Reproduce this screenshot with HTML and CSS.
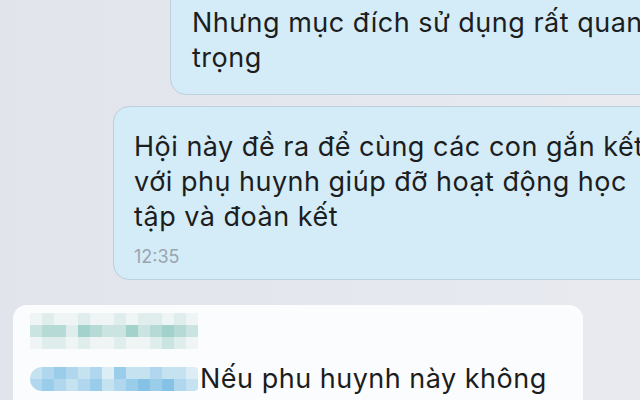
FILE: index.html
```html
<!DOCTYPE html>
<html lang="vi">
<head>
<meta charset="utf-8">
<link rel="stylesheet" href="styles.css">
</head>
<body>
<div class="chat">
  <div class="bubble out b1">
    <p class="msg">Nhưng mục đích sử dụng rất quan<br>trọng</p>
  </div>
  <div class="bubble out b2">
    <p class="msg">Hội này đề ra để cùng các con gắn kết<br>với phụ huynh giúp đỡ hoạt động học<br>tập và đoàn kết</p>
    <div class="time">12:35</div>
  </div>
  <div class="bubble in b3">
    <div class="pix name">
      <span class="c0"></span><span class="c1"></span><span class="c0"></span><span class="c0"></span><span class="c1"></span><span class="c0"></span><span class="c0"></span><span class="c1"></span><span class="c0"></span><span class="c1"></span><span class="c1"></span><span class="c0"></span><span class="c1"></span><span class="c0"></span>
      <span class="c2"></span><span class="c3"></span><span class="c3"></span><span class="c1"></span><span class="c4"></span><span class="c3"></span><span class="c2"></span><span class="c2"></span><span class="c4"></span><span class="c2"></span><span class="c3"></span><span class="c4"></span><span class="c3"></span><span class="c2"></span>
      <span class="c0"></span><span class="c1"></span><span class="c1"></span><span class="c0"></span><span class="c1"></span><span class="c0"></span><span class="c0"></span><span class="c1"></span><span class="c0"></span><span class="c0"></span><span class="c1"></span><span class="c2"></span><span class="c1"></span><span class="c0"></span>
    </div>
    <div class="line">
      <div class="pix mention">
        <span class="d1"></span><span class="d2"></span><span class="d3"></span><span class="d2"></span><span class="d1"></span><span class="d2"></span><span class="d0"></span><span class="d3"></span><span class="d1"></span><span class="d1"></span><span class="d2"></span><span class="d1"></span><span class="d1"></span><span class="d0"></span>
        <span class="d2"></span><span class="d3"></span><span class="d2"></span><span class="d1"></span><span class="d2"></span><span class="d3"></span><span class="d1"></span><span class="d2"></span><span class="d3"></span><span class="d4"></span><span class="d3"></span><span class="d4"></span><span class="d2"></span><span class="d1"></span>
      </div>
      <p class="msg">Nếu phu huynh này không</p>
    </div>
  </div>
</div>
</body>
</html>
```
FILE: styles.css
```css
html, body {
  margin: 0;
  padding: 0;
}
body {
  width: 640px;
  height: 400px;
  overflow: hidden;
  background: linear-gradient(90deg, #e2e4eb 0%, #e6e8ef 60%, #e8eaf0 100%);
  font-family: "Inter", "Noto Sans", sans-serif;
  color: #1c1d20;
}
.chat {
  display: flex;
  flex-direction: column;
}
.bubble {
  box-sizing: border-box;
  border-radius: 16px;
}
.out {
  background: #d4ecf8;
  border: 1px solid #bccfdc;
  width: 640px;
}
.msg {
  margin: 0;
  font-size: 27px;
  line-height: 35px;
  white-space: nowrap;
  letter-spacing: 0.5px;
}
.b1 {
  margin-left: 170px;
  margin-top: -30px;
  padding: 34px 0 19px 21px;
}
.b2 {
  margin-left: 113px;
  margin-top: 11px;
  padding: 22px 0 10px 20px;
  height: 174px;
}
.time {
  margin-top: 12px;
  font-size: 18px;
  line-height: 22px;
  color: #9ba4ae;
}
.in {
  background: #fbfcfd;
  margin-left: 13px;
  margin-top: 25px;
  width: 570px;
  height: 140px;
  padding: 8px 0 0 17px;
  border-radius: 14px;
}
.pix {
  display: grid;
  grid-template-columns: repeat(14, 12px);
  grid-auto-rows: 12px;
}
.pix span { display: block; }
.name { width: 168px; }
.c0 { background: #eef5f4; }
.c1 { background: #dfeeec; }
.c2 { background: #c9e4e1; }
.c3 { background: #b6dbd7; }
.c4 { background: #a3d2cd; }
.line {
  display: flex;
  align-items: center;
  margin-top: 12px;
  gap: 2px;
}
.mention {
  border-radius: 12px 4px 4px 12px;
  overflow: hidden;
}
.d0 { background: #dcedf6; }
.d1 { background: #c5e2f1; }
.d2 { background: #b0d7ee; }
.d3 { background: #9acdea; }
.d4 { background: #86c2e6; }
```
